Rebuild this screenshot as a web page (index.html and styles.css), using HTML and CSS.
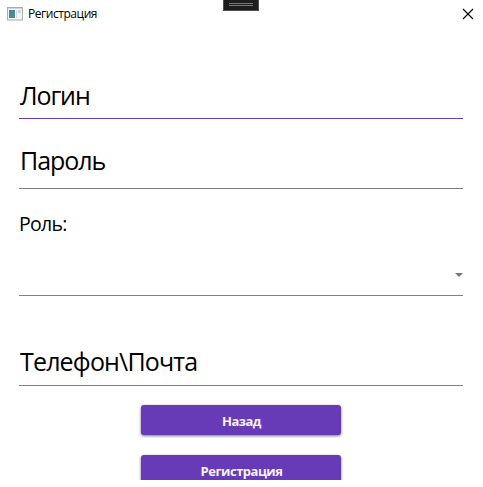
FILE: index.html
```html
<!DOCTYPE html>
<html lang="ru">
<head>
<meta charset="utf-8">
<title>Регистрация</title>
<link rel="stylesheet" href="styles.css">
</head>
<body>
<main class="window">
  <header class="titlebar">
    <svg class="app-icon" width="16" height="14" viewBox="0 0 16 14">
      <defs><linearGradient id="pane" x1="0" y1="0" x2="1" y2="1"><stop offset="0" stop-color="#4b79b0"/><stop offset="1" stop-color="#4c9b72"/></linearGradient></defs>
      <rect x=".5" y=".5" width="15" height="12.5" fill="#f3f4f5" stroke="#a9abad"/>
      <path d="M1 1.5h14" stroke="#d2d5d8"/>
      <rect x="2" y="3" width="6" height="8" fill="url(#pane)"/>
      <path d="M9.5 3v8" stroke="#c9dde0"/>
      <rect x="11" y="3" width="3" height="3" fill="#c5d8e8"/>
    </svg>
    <span class="title">Регистрация</span>
    <svg class="close" width="12" height="12" viewBox="0 0 12 12"><path d="M1 1l10 10M11 1L1 11" stroke="#000" stroke-width="1.15"/></svg>
  </header>
  <div class="grip"><span class="grip-lines"></span></div>
  <form class="form">
    <div class="field login"><span class="t-login">Логин</span></div>
    <div class="field password"><span class="t-password">Пароль</span></div>
    <div class="label">Роль:</div>
    <div class="field select"><span class="arrow"></span></div>
    <div class="field contact"><span class="t-contact">Телефон\Почта</span></div>
    <div class="actions">
      <button class="btn back" type="button">Назад</button>
      <button class="btn register" type="button">Регистрация</button>
    </div>
  </form>
</main>
</body>
</html>
```
FILE: styles.css
```css
* { box-sizing: border-box; }
body {
  margin: 0;
  background: #fff;
  color: #000;
  font-family: "Open Sans", "Noto Sans", sans-serif;
}
.window {
  position: relative;
  width: 483px;
  height: 480px;
  overflow: hidden;
  background: #fff;
}
.titlebar {
  display: flex;
  align-items: center;
  height: 27px;
  padding: 0 9px 0 7px;
}
.app-icon { margin-right: 5px; }
.title {
  font-size: 12px;
  line-height: 27px;
  letter-spacing: -0.45px;
}
.close { margin-left: auto; }
.grip {
  position: absolute;
  top: 0;
  left: 223px;
  width: 36px;
  height: 11px;
  padding: 3px 5px 0;
  background: #1e1e1f;
  border: 1px solid #505050;
  border-top: 0;
}
.grip-lines {
  display: block;
  height: 3px;
  border-top: 1px solid #777;
  border-bottom: 1px solid #777;
}
.form { margin: 49px 20px 0 19px; }
.field {
  height: 43px;
  border-bottom: 1px solid #808080;
  padding-left: 1px;
  font-size: 25px;
  line-height: 38px;
  white-space: nowrap;
}
.login { border-color: #673ab7; }
.password { margin-top: 22px; height: 48px; }
.label {
  margin-top: 21px;
  height: 28px;
  font-size: 19.5px;
  line-height: 28px;
  letter-spacing: -0.7px;
}
.select {
  display: flex;
  justify-content: flex-end;
  height: 43px;
  margin-top: 15px;
  padding-top: 20px;
}
.arrow {
  width: 8px;
  height: 4px;
  background: #777;
  clip-path: polygon(0 0, 100% 0, 50% 100%);
}
.contact { margin-top: 47px; line-height: 36px; }
.t-login { letter-spacing: -1.1px; }
.t-password { letter-spacing: -1.05px; }
.t-contact { letter-spacing: -0.83px; }
.actions {
  display: flex;
  flex-direction: column;
  align-items: center;
  gap: 20px;
  padding-top: 19px;
}
.btn {
  width: 200px;
  height: 30px;
  flex: none;
  border: 0;
  border-radius: 3px;
  padding: 0 0 0 1px;
  background: #673ab7;
  box-shadow: 0 1px 3px rgba(0, 0, 0, .55);
  color: #f5f1fb;
  font: 700 13px/32px "Open Sans", "Noto Sans", sans-serif;
  letter-spacing: -0.5px;
}
```
